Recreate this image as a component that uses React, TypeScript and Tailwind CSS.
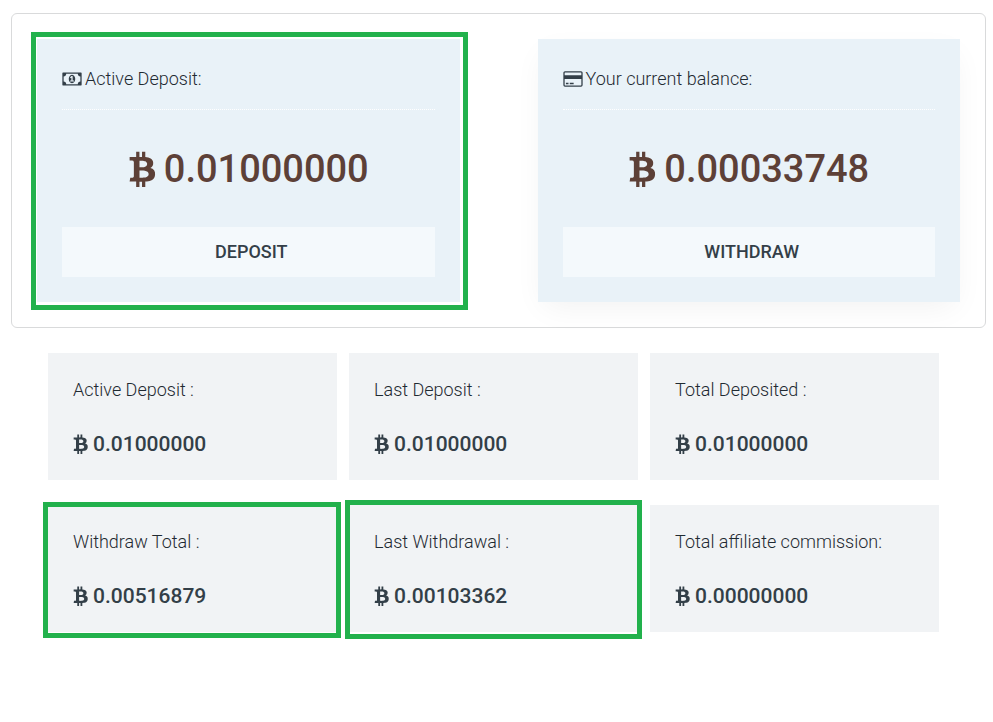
import clsx from "clsx";
import type { ReactNode } from "react";

type IconProps = { className?: string };

type Balance = {
  title: string;
  amount: string;
  action: string;
  icon: ReactNode;
  highlight?: string;
};

type Stat = {
  label: string;
  amount: string;
  highlight?: string;
};

function BtcIcon({ className }: IconProps) {
  return (
    <svg viewBox="0 0 1280 1792" fill="currentColor" aria-hidden="true" className={className}>
      <path d="M1167 640q18 182-131 258 117 28 175 103t45 214q-7 71-32.5 125t-64.5 89-97 58.5-121.5 34.5-145.5 15v255h-154v-251q-80 0-122-1v252h-154v-255q-18 0-54-.5t-55-.5h-200l31-183h111q50 0 58-51v-402h16q-6-1-16-1v-287q-13-68-89-68h-111v-164l212 1q64 0 97-1v-252h154v247q82-2 122-2v-245h154v252q79 7 140 22.5t113 45 82.5 78 36.5 114.5zM952 1185q0-36-15-64t-37-46-57.5-30.5-65.5-18.5-74-9-69-3-64.5 1-47.5 1v338q8 0 37 .5t48 .5 53-1.5 58.5-4 57-8.5 55.5-14 47.5-21 39.5-30 24.5-40 9.5-51zM881 709q0-33-12.5-58.5t-30.5-42-48-28-55-16.5-61.5-8-58-2.5-54 1-39.5.5v307q5 0 34.5.5t46.5 0 50-2 55-5.5 51.5-11 48.5-18.5 37-27 27-38.5 9-51z" />
    </svg>
  );
}

function MoneyIcon({ className }: IconProps) {
  return (
    <svg viewBox="0 0 1920 1792" fill="currentColor" aria-hidden="true" className={className}>
      <path d="M768 1152h384v-96h-128v-448h-114l-148 137 77 80q42-37 55-57h2v288h-128v96zM1280 896q0 70-21 142t-59.5 134-101.5 101-138 39-138-39-101.5-101-59.5-134-21-142 21-142 59.5-134 101.5-101 138-39 138 39 101.5 101 59.5 134 21 142zM1792 1152v-512q-106 0-181-75t-75-181h-1152q0 106-75 181t-181 75v512q106 0 181 75t75 181h1152q0-106 75-181t181-75zM1920 320v1152q0 26-19 45t-45 19h-1792q-26 0-45-19t-19-45v-1152q0-26 19-45t45-19h1792q26 0 45 19t19 45z" />
    </svg>
  );
}

function CardIcon({ className }: IconProps) {
  return (
    <svg viewBox="0 0 1920 1792" fill="currentColor" aria-hidden="true" className={className}>
      <path d="M1760 128q66 0 113 47t47 113v1216q0 66-47 113t-113 47h-1600q-66 0-113-47t-47-113v-1216q0-66 47-113t113-47h1600zM160 256q-13 0-22.5 9.5t-9.5 22.5v224h1664v-224q0-13-9.5-22.5t-22.5-9.5h-1600zM1760 1536q13 0 22.5-9.5t9.5-22.5v-608h-1664v608q0 13 9.5 22.5t22.5 9.5h1600zM256 1408v-128h256v128h-256zM640 1408v-128h384v128h-384z" />
    </svg>
  );
}

const balances: Balance[] = [
  {
    title: "Active Deposit:",
    amount: "0.01000000",
    action: "Deposit",
    icon: <MoneyIcon className="h-[18px] w-5 text-[#333f48]" />,
    highlight: "-top-[7px] -right-2 -bottom-2 -left-1.5",
  },
  {
    title: "Your current balance:",
    amount: "0.00033748",
    action: "Withdraw",
    icon: <CardIcon className="h-[18px] w-5 text-[#333f48]" />,
  },
];

const stats: Stat[] = [
  { label: "Active Deposit :", amount: "0.01000000" },
  { label: "Last Deposit :", amount: "0.01000000" },
  { label: "Total Deposited :", amount: "0.01000000" },
  { label: "Withdraw Total :", amount: "0.00516879", highlight: "-top-[3px] -right-1 -bottom-1.5 -left-[5px]" },
  { label: "Last Withdrawal :", amount: "0.00103362", highlight: "-top-[5px] -right-1 -bottom-[7px] -left-1" },
  { label: "Total affiliate commission:", amount: "0.00000000" },
];

function Highlight({ className }: IconProps) {
  return <div className={clsx("pointer-events-none absolute border-[5px] border-[#22b14c]", className)} />;
}

function BalanceCard({ title, amount, action, icon, highlight }: Balance) {
  return (
    <section
      className={clsx("relative bg-[#e9f2f8] p-[25px]", !highlight && "shadow-[0_10px_30px_-6px_rgba(0,0,0,0.06)]")}
    >
      <h2 className="flex items-center gap-[3px] border-b border-dotted border-white pb-[15px] text-lg leading-[30px] font-light text-[#1f2a32]">
        {icon}
        {title}
      </h2>
      <p className="flex items-start justify-center gap-2 pt-[39px] pb-[37px] text-[38px] leading-[41px] font-medium text-[#5d4037]">
        <BtcIcon className="h-[38px] w-7" />
        {amount}
      </p>
      <button type="button" className="h-[50px] w-full bg-[#f4f9fc] pl-1.5 text-lg font-medium uppercase">
        {action}
      </button>
      {highlight && <Highlight className={highlight} />}
    </section>
  );
}

function StatCard({ label, amount, highlight }: Stat) {
  return (
    <section className="relative bg-[#f1f3f5] p-[25px]">
      <h3 className="text-lg leading-6 font-light text-[#1f2a32]">{label}</h3>
      <p className="mt-[31px] flex items-start gap-[5px] text-[21px] leading-[22px] font-medium">
        <BtcIcon className="h-[21px] w-[15px]" />
        {amount}
      </p>
      {highlight && <Highlight className={highlight} />}
    </section>
  );
}

export default function App() {
  return (
    <main className="min-h-screen bg-white pt-[13px] pr-[7px] pb-10 pl-[11px] font-[Roboto,sans-serif] text-[#333f48]">
      <div className="grid grid-cols-2 gap-[78px] rounded-md border border-[#d9dadb] p-[25px]">
        {balances.map((item) => (
          <BalanceCard key={item.title} {...item} />
        ))}
      </div>
      <div className="mt-[25px] mr-[47px] ml-[37px] grid grid-cols-3 gap-x-3 gap-y-[25px]">
        {stats.map((item) => (
          <StatCard key={item.label} {...item} />
        ))}
      </div>
    </main>
  );
}
